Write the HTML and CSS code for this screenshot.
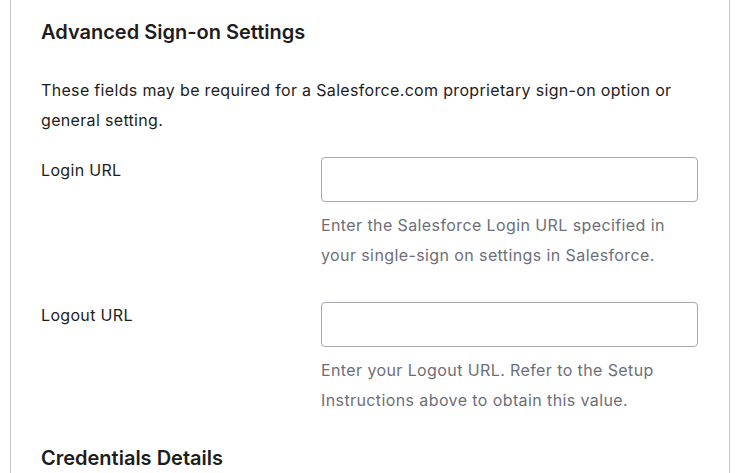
FILE: index.html
```html
<!DOCTYPE html>
<html>
<head>
<meta charset="utf-8">
<link rel="stylesheet" href="styles.css">
</head>
<body>
<div class="page">
  <section class="card">
    <h2 class="section-title">Advanced Sign-on Settings</h2>
    <p class="intro">These fields may be required for a Salesforce.com proprietary sign-on option or general setting.</p>
    <div class="field">
      <label class="field-label">Login URL</label>
      <div class="field-control">
        <input class="text-input" type="text">
        <p class="help">Enter the Salesforce Login URL specified in your single-sign on settings in Salesforce.</p>
      </div>
    </div>
    <div class="field">
      <label class="field-label">Logout URL</label>
      <div class="field-control">
        <input class="text-input" type="text">
        <p class="help">Enter your Logout URL. Refer to the Setup Instructions above to obtain this value.</p>
      </div>
    </div>
    <h2 class="section-title second">Credentials Details</h2>
  </section>
</div>
</body>
</html>
```
FILE: styles.css
```css
html, body {
  margin: 0;
  padding: 0;
  background: #ffffff;
}
body {
  font-family: Inter, "Noto Sans", sans-serif;
  color: #1d1d21;
  overflow: hidden;
}
.page {
  padding-left: 10px;
  height: 473px;
  overflow: hidden;
}
.card {
  width: 720px;
  height: 473px;
  box-sizing: border-box;
  border-left: 1px solid #c4c4c8;
  border-right: 1px solid #c4c4c8;
  padding: 20px 30px 0 30px;
}
.section-title {
  margin: 0;
  font-size: 20px;
  line-height: 24px;
  font-weight: 600;
  letter-spacing: 0;
}
.second {
  margin-top: 31px;
}
.intro {
  margin: 31px 0 0 0;
  font-size: 16px;
  line-height: 30px;
  letter-spacing: 0.33px;
  width: 650px;
}
.field {
  display: flex;
  align-items: flex-start;
  margin-top: 22px;
}
.field + .field {
  margin-top: 32px;
}
.field-label {
  width: 280px;
  flex: none;
  font-size: 16px;
  line-height: 26px;
  letter-spacing: 0.33px;
}
.field-control {
  width: 377px;
}
.text-input {
  display: block;
  width: 377px;
  height: 45px;
  box-sizing: border-box;
  border: 1px solid #a8a8b0;
  border-radius: 4px;
  margin: 0;
  background: #fff;
}
.help {
  margin: 8px 0 0 0;
  font-size: 16px;
  line-height: 30px;
  letter-spacing: 0.4px;
  color: #6e6e78;
  width: 370px;
}
```
